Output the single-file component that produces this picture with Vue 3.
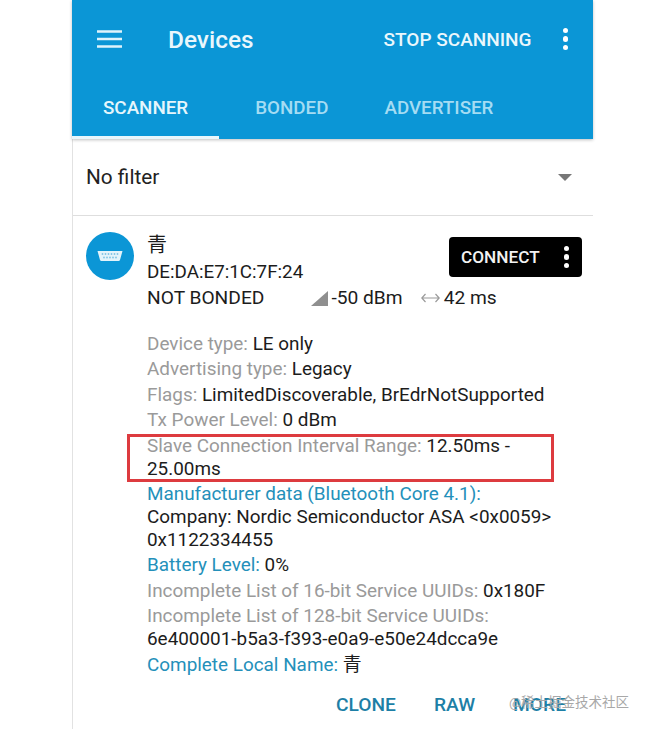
<template>
  <div class="page">
    <div class="phone">
      <header class="appbar">
        <div class="toolbar">
          <svg class="menu-icon" width="25" height="18" viewBox="0 0 25 18">
            <path d="M0 1.500h25M0 9h25M0 16.500h25" stroke="#dff3fb" stroke-width="2.400" />
          </svg>
          <span class="title">Devices</span>
          <span class="stop">STOP SCANNING</span>
          <span class="dots light"><i></i><i></i><i></i></span>
        </div>
        <nav class="tabs">
          <div v-for="tab in tabs" :key="tab.label" class="tab" :class="{ active: tab.active }">{{ tab.label }}</div>
        </nav>
      </header>

      <div class="filter">
        <span>No filter</span>
        <span class="caret"></span>
      </div>

      <section class="device">
        <div class="device-top">
          <div class="avatar">
            <svg width="26" height="12" viewBox="0 0 26 12">
              <path d="M0.500 1h25l-2.500 9a1.500 1.500 0 0 1-1.500 1h-17a1.500 1.500 0 0 1-1.500-1z" fill="#e3f3fa" />
              <g fill="#7fc3e4">
                <circle v-for="x in [5, 8, 11, 14, 17, 20]" :key="x" :cx="x + 0.500" cy="4" r="0.900" />
                <circle v-for="x in [6.500, 9.500, 12.500, 15.500, 18.500]" :key="x" :cx="x + 0.500" cy="7.500" r="0.900" />
              </g>
            </svg>
          </div>
          <div class="device-head">
            <div class="name">青</div>
            <div class="mac">DE:DA:E7:1C:7F:24</div>
            <div class="status">
              <span class="bonded">NOT BONDED</span>
              <svg class="signal" width="17" height="15" viewBox="0 0 17 15"><path d="M17 0v15H0z" fill="#8f8f8f" /></svg>
              <span>-50 dBm</span>
              <svg class="interval" width="19" height="10" viewBox="0 0 19 10">
                <path d="M4.500 1 .8 5l3.700 4M.8 5h17.400M14.500 1l3.700 4-3.700 4" fill="none" stroke="#9a9a9a" stroke-width="1.200" />
              </svg>
              <span>42 ms</span>
            </div>
          </div>
          <button class="connect">
            <span>CONNECT</span>
            <span class="dots"><i></i><i></i><i></i></span>
          </button>
        </div>

        <div class="details">
          <p v-for="row in rows" :key="row.label" :class="{ hl: row.boxed }">
            <span :class="row.blue ? 'blue' : 'grey'">{{ row.label }}</span>
            <span v-if="row.value">{{ ' ' + row.value }}</span>
            <template v-for="line in row.lines" :key="line"><br />{{ line }}</template>
          </p>
        </div>

        <div class="actions">
          <span>CLONE</span>
          <span>RAW</span>
          <span>MORE</span>
        </div>
      </section>
    </div>
    <span class="watermark">@稀土掘金技术社区</span>
  </div>
</template>

<script setup>
const tabs = [
  { label: 'SCANNER', active: true },
  { label: 'BONDED' },
  { label: 'ADVERTISER' },
]

const rows = [
  { label: 'Device type:', value: 'LE only' },
  { label: 'Advertising type:', value: 'Legacy' },
  { label: 'Flags:', value: 'LimitedDiscoverable, BrEdrNotSupported' },
  { label: 'Tx Power Level:', value: '0 dBm' },
  { label: 'Slave Connection Interval Range:', value: '12.50ms - 25.00ms', boxed: true },
  {
    label: 'Manufacturer data (Bluetooth Core 4.1):',
    blue: true,
    lines: ['Company: Nordic Semiconductor ASA <0x0059>', '0x1122334455'],
  },
  { label: 'Battery Level:', value: '0%', blue: true },
  { label: 'Incomplete List of 16-bit Service UUIDs:', value: '0x180F' },
  { label: 'Incomplete List of 128-bit Service UUIDs:', lines: ['6e400001-b5a3-f393-e0a9-e50e24dcca9e'] },
  { label: 'Complete Local Name:', value: '青', blue: true },
]
</script>

<style>
body {
  margin: 0;
  background: #fff;
}
</style>

<style scoped>
.page {
  position: relative;
  width: 650px;
  height: 729px;
  overflow: hidden;
  background: #fff;
  font-family: Roboto, "Noto Sans CJK SC", sans-serif;
  color: #1c1c1c;
}

.phone {
  width: 521px;
  height: 729px;
  margin-left: 72px;
  border-left: 1px solid #e2e2e2;
  box-sizing: border-box;
}

.appbar {
  height: 139px;
  margin-left: -1px;
  background: #0b96d6;
  box-shadow: 0 1px 3px rgba(0, 0, 0, 0.25);
}

.toolbar {
  display: flex;
  align-items: center;
  height: 78px;
  padding: 0 25px 0 25px;
  box-sizing: border-box;
  color: #eaf7fc;
}

.title {
  margin-left: 46px;
  font-size: 24.400px;
  font-weight: 500;
}

.stop {
  margin-left: auto;
  margin-right: 31px;
  font-size: 19px;
  font-weight: 500;
}

.dots {
  display: flex;
  flex-direction: column;
  gap: 3px;
}

.dots i {
  width: 5.500px;
  height: 5.500px;
  border-radius: 50%;
  background: #fff;
}

.tabs {
  display: flex;
  height: 61px;
}

.tab {
  display: flex;
  align-items: center;
  justify-content: center;
  height: 61px;
  padding: 2px 28px 0;
  box-sizing: border-box;
  font-size: 18.800px;
  font-weight: 500;
  color: #a5dcf3;
  border-bottom: 3px solid transparent;
}

.tab.active {
  padding: 2px 31px 0;
  color: #e6f6fc;
  border-bottom-color: #e9f6fb;
}

.tab:nth-child(2) {
  padding-left: 36px;
}

.filter {
  display: flex;
  align-items: center;
  justify-content: space-between;
  height: 76px;
  padding: 0 21px 0 13px;
  border-bottom: 1px solid #dedede;
  font-size: 20.800px;
  color: #222;
}

.caret {
  width: 0;
  height: 0;
  border-left: 7px solid transparent;
  border-right: 7px solid transparent;
  border-top: 7px solid #777;
}

.device {
  padding: 16px 11px 0 13px;
}

.device-top {
  display: flex;
  align-items: flex-start;
}

.avatar {
  display: flex;
  align-items: center;
  justify-content: center;
  flex: none;
  width: 48px;
  height: 48px;
  border-radius: 50%;
  background: #0b96d6;
}

.device-head {
  flex: 1;
  min-width: 0;
  margin-left: 13px;
  font-size: 18.800px;
  line-height: 26px;
}

.name {
  font-size: 20px;
  line-height: 27px;
}

.status {
  display: flex;
  align-items: center;
  font-size: 19.200px;
  white-space: nowrap;
}

.signal {
  flex: none;
  margin: 0 3px 0 47px;
}

.interval {
  flex: none;
  margin: 0 4px 0 18px;
}

.connect {
  display: flex;
  align-items: center;
  justify-content: space-between;
  flex: none;
  width: 133px;
  height: 40px;
  margin-top: 5px;
  padding: 0 13px 0 12px;
  border: 0;
  border-radius: 4px;
  background: #000;
  color: #f2f2f2;
  font: 500 17.200px Roboto, sans-serif;
}

.details {
  width: 406px;
  margin: 22px 0 0 61px;
  font-size: 18.900px;
  line-height: 22.800px;
}

.details p {
  margin: 0 0 2.700px;
}

.hl {
  position: relative;
}

.hl::after {
  content: "";
  position: absolute;
  left: -20px;
  top: -1px;
  width: 427px;
  height: 48px;
  box-sizing: border-box;
  border: 3px solid #dd3b3f;
}

.grey {
  color: #9a9a9a;
}

.blue {
  color: #2490ba;
}

.actions {
  display: flex;
  justify-content: flex-end;
  gap: 38px;
  margin-top: 17px;
  padding-right: 16px;
  font-size: 19.200px;
  font-weight: 500;
  color: #1d7fa6;
}

.watermark {
  position: absolute;
  left: 509px;
  top: 691px;
  font-size: 13.500px;
  color: #a8a8a8;
  white-space: nowrap;
}
</style>
